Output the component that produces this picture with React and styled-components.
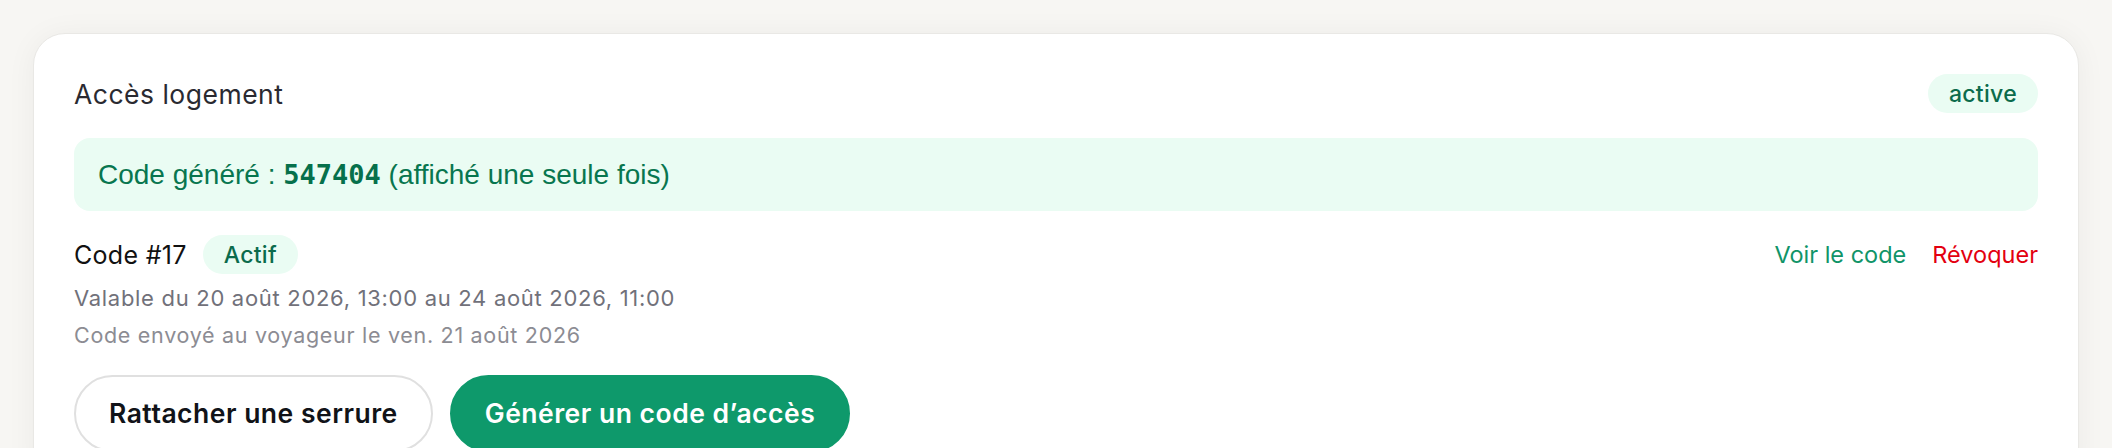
import React from 'react';
import styled, { createGlobalStyle } from 'styled-components';

const GlobalStyle = createGlobalStyle`
  * { box-sizing: border-box; }
  body {
    margin: 0;
    background: #f7f6f3;
    font-family: Inter, "Noto Sans", "Liberation Sans", sans-serif;
    -webkit-font-smoothing: antialiased;
  }
`;

const Page = styled.div`
  padding: 33px;
`;

const Card = styled.section`
  background: #fff;
  border: 1px solid #e9e8e5;
  border-radius: 32px;
  padding: 40px;
  box-shadow: 0 2px 30px rgba(0, 0, 0, 0.05);
`;

const Header = styled.div`
  display: flex;
  align-items: center;
  justify-content: space-between;
`;

const Title = styled.h2`
  margin: 0;
  font-size: 26.5px;
  font-weight: 400;
  letter-spacing: 0.5px;
  line-height: 36px;
  color: #2a2a31;
`;

const Pill = styled.span`
  display: inline-flex;
  align-items: center;
  height: 39px;
  padding: 0 21px;
  border-radius: 999px;
  background: #eafcf3;
  color: #0b6b4c;
  font-size: 23px;
  font-weight: 500;
  letter-spacing: 0.3px;
`;

const Notice = styled.div`
  margin-top: 25px;
  padding: 16px 24px;
  border-radius: 16px;
  background: #eafcf3;
  color: #08764f;
  font-family: "Liberation Sans", Arial, sans-serif;
  font-size: 28px;
  line-height: 41px;
`;

const CodeValue = styled.strong`
  font-family: "DejaVu Sans Mono", "Liberation Mono", monospace;
  font-weight: 700;
  font-size: 27px;
  color: #06704b;
`;

const CodeRow = styled.div`
  margin-top: 24px;
  display: flex;
  align-items: center;
  justify-content: space-between;
`;

const CodeName = styled.div`
  display: flex;
  align-items: center;
  gap: 16px;
  font-size: 25px;
  letter-spacing: 0.3px;
  color: #111;
`;

const Links = styled.div`
  display: flex;
  gap: 26px;
`;

const LinkButton = styled.button`
  border: none;
  background: none;
  padding: 0;
  font: inherit;
  font-size: 23.5px;
  cursor: pointer;
  color: ${p => (p.danger ? '#e3000f' : '#109468')};
`;

const Detail = styled.div`
  margin-top: ${p => p.gap || 0}px;
  font-size: ${p => (p.muted ? 21.5 : 22)}px;
  letter-spacing: 0.7px;
  line-height: ${p => (p.muted ? 30 : 32)}px;
  color: ${p => (p.muted ? '#8c8c93' : '#71717a')};
`;

const Actions = styled.div`
  margin-top: 25px;
  display: flex;
  gap: 17px;
`;

const Button = styled.button`
  padding: 20px 33px;
  border-radius: 999px;
  font-family: inherit;
  font-size: 26.5px;
  font-weight: 600;
  letter-spacing: 0.5px;
  line-height: 33px;
  cursor: pointer;
  border: 2px solid ${p => (p.primary ? '#0e996b' : '#e0e0e0')};
  background: ${p => (p.primary ? '#0e996b' : '#fff')};
  color: ${p => (p.primary ? '#fff' : '#111318')};
`;

export default function App() {
  return (
    <>
      <GlobalStyle />
      <Page>
        <Card>
          <Header>
            <Title>Accès logement</Title>
            <Pill>active</Pill>
          </Header>
          <Notice>
            Code généré : <CodeValue>547404</CodeValue> (affiché une seule fois)
          </Notice>
          <CodeRow>
            <CodeName>
              Code #17
              <Pill>Actif</Pill>
            </CodeName>
            <Links>
              <LinkButton>Voir le code</LinkButton>
              <LinkButton danger>Révoquer</LinkButton>
            </Links>
          </CodeRow>
          <Detail gap={8}>Valable du 20 août 2026, 13:00 au 24 août 2026, 11:00</Detail>
          <Detail muted gap={6}>Code envoyé au voyageur le ven. 21 août 2026</Detail>
          <Actions>
            <Button>Rattacher une serrure</Button>
            <Button primary>Générer un code d’accès</Button>
          </Actions>
        </Card>
      </Page>
    </>
  );
}
